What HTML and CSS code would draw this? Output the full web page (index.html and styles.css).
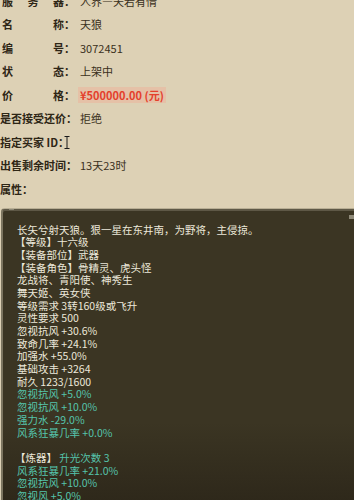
FILE: index.html
```html
<!DOCTYPE html>
<html lang="zh-CN">
<head>
<meta charset="utf-8">
<link rel="stylesheet" href="styles.css">
</head>
<body>
<div class="page">
  <div class="info">
    <div class="row"><span class="lbl just">服务器</span><span class="colon">：</span><span class="val">人界—天若有情</span></div>
    <div class="row"><span class="lbl just">名称</span><span class="colon">：</span><span class="val">天狼</span></div>
    <div class="row"><span class="lbl just">编号</span><span class="colon">：</span><span class="val">3072451</span></div>
    <div class="row"><span class="lbl just">状态</span><span class="colon">：</span><span class="val">上架中</span></div>
    <div class="row"><span class="lbl just">价格</span><span class="colon">：</span><span class="val price">¥500000.00 (元)</span></div>
    <div class="row"><span class="lbl">是否接受还价：</span><span class="val">拒绝</span></div>
    <div class="row cursor-row"><span class="lbl">指定买家 ID：</span><span class="ibeam"><svg width="6" height="13" viewBox="0 0 6 13"><path d="M0.5 0.5h2.5M3 0.5h2.5M3 0.5v12M0.5 12.5h2.5M3 12.5h2.5" stroke="#1a1a1a" stroke-width="1" fill="none"/></svg></span></div>
    <div class="row"><span class="lbl">出售剩余时间：</span><span class="val">13天23时</span></div>
    <div class="row"><span class="lbl">属性：</span></div>
  </div>
  <div class="tip">
    <span class="grip grip-l"></span>
    <span class="grip grip-r"></span>
    <div class="line">长矢兮射天狼。狠一星在东井南，为野将，主侵掠。</div>
    <div class="line br">【等级】十六级</div>
    <div class="line br">【装备部位】武器</div>
    <div class="line br">【装备角色】骨精灵、虎头怪</div>
    <div class="line">龙战将、青阳使、神秀生</div>
    <div class="line">舞天姬、英女侠</div>
    <div class="line">等级需求 3转160级或飞升</div>
    <div class="line">灵性要求 500</div>
    <div class="line">忽视抗风 +30.6%</div>
    <div class="line">致命几率 +24.1%</div>
    <div class="line">加强水 +55.0%</div>
    <div class="line">基础攻击 +3264</div>
    <div class="line">耐久 1233/1600</div>
    <div class="line teal">忽视抗风 +5.0%</div>
    <div class="line teal">忽视抗风 +10.0%</div>
    <div class="line teal">强力水 -29.0%</div>
    <div class="line teal">风系狂暴几率 +0.0%</div>
    <div class="line blank"></div>
    <div class="line br">【炼器】 <span class="teal">升光次数 3</span></div>
    <div class="line teal">风系狂暴几率 +21.0%</div>
    <div class="line teal">忽视抗风 +10.0%</div>
    <div class="line teal">忽视风 +5.0%</div>
  </div>
</div>
</body>
</html>
```

FILE: styles.css
```css
html, body {
  margin: 0;
  padding: 0;
  background: #ddd1b5;
  overflow: hidden;
}
body {
  font-family: "Noto Sans CJK SC", "Noto Sans", sans-serif;
  width: 354px;
  height: 500px;
}
.page {
  margin-top: -11px;
}
.info {
  display: flex;
  flex-direction: column;
}
.row {
  height: 23.5px;
  display: flex;
  align-items: center;
  font-size: 11px;
  position: relative;
}
.lbl {
  font-weight: 700;
  color: #2e2616;
  white-space: pre;
}
.lbl.just {
  width: 62px;
  margin-left: 2px;
  text-align: justify;
  text-align-last: justify;
}
.colon {
  font-weight: 700;
  color: #2e2616;
  width: 13px;
}
.val {
  color: #3a3020;
  margin-left: 3px;
}
.price {
  color: #e4402c;
  font-weight: 700;
  background: rgba(240, 172, 150, 0.45);
  padding: 0 2px;
  margin-left: 1px;
}
.cursor-row .ibeam {
  position: absolute;
  left: 64px;
  top: 6px;
}
.tip {
  position: relative;
  margin-top: 7px;
  margin-left: 1px;
  border-top: 1px solid #b8ae94;
  border-left: 2px solid #7c7560;
  box-shadow: inset 0 2px 0 #5e5846;
  border-radius: 4px 0 0 0;
  background: linear-gradient(#3b3523 0%, #3b3523 70%, #2c2619 100%);
  padding: 15px 0 0 14px;
  height: 290px;
  overflow: hidden;
  color: #ece8da;
  font-size: 10.5px;
}
.grip {
  position: absolute;
  width: 5px;
  height: 4px;
  background: #8f8a78;
  top: -3px;
}
.grip-l { left: 6px; }
.grip-r { right: 0; top: 6px; }
.line {
  height: 12.7px;
  line-height: 12.7px;
  white-space: nowrap;
}
.line.br {
  margin-left: -2px;
}
.teal {
  color: #55c4ac;
}
```
